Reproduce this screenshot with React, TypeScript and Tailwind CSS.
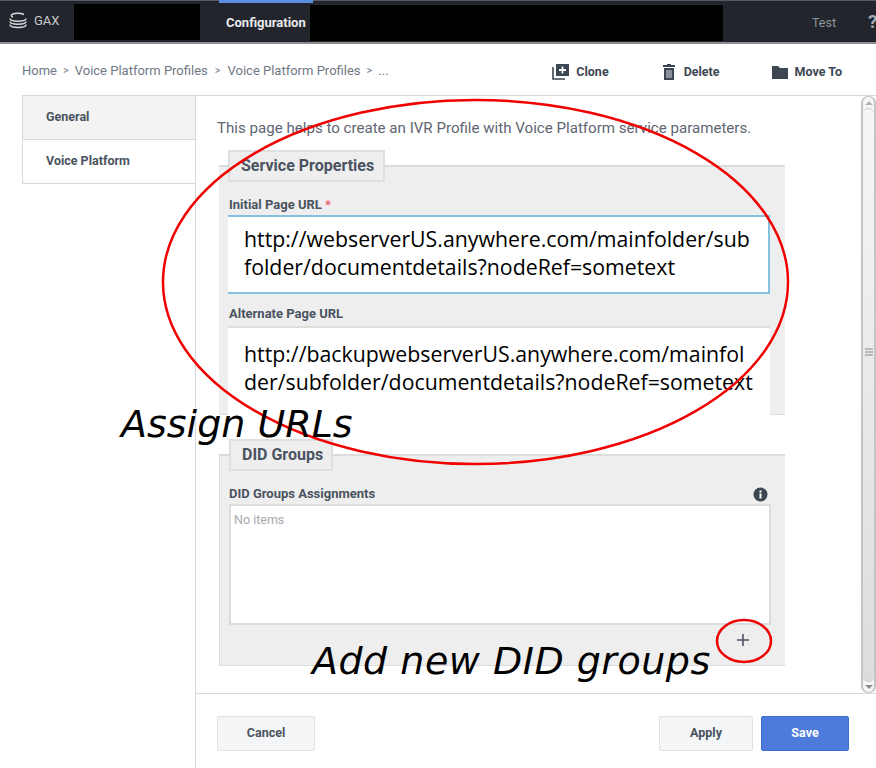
const ui = 'font-["Roboto",sans-serif]';

function CloneIcon() {
  return (
    <svg width="17" height="16" viewBox="0 0 17 16" className="text-[#3d4653]">
      <path d="M1 3v12h12" fill="none" stroke="currentColor" strokeWidth="1.600" />
      <path fillRule="evenodd" d="M4 0h13v12H4zM9.600 2.500v2.600H7v1.800h2.600v2.600h1.800V6.900H14V5.100h-2.600V2.500z" fill="currentColor" />
    </svg>
  );
}

function TrashIcon() {
  return (
    <svg width="12" height="16" viewBox="0 0 12 16" className="text-[#3d4653]">
      <path d="M4 0h4v1h4v2H0V1h4z" fill="currentColor" />
      <path fillRule="evenodd" d="M1 4h10v12H1zM3 6v8h6V6z" fill="currentColor" />
      <path d="M3 6h6v8H3z" fill="#8c929a" />
    </svg>
  );
}

function FolderIcon() {
  return (
    <svg width="16" height="13" viewBox="0 0 16 13" className="text-[#3d4653]">
      <path d="M0 0h6l2 2h8v11H0z" fill="currentColor" />
    </svg>
  );
}

function DbIcon() {
  return (
    <svg width="20" height="18" viewBox="0 0 20 18" fill="none" stroke="#d5d7da" strokeWidth="1.500">
      <path d="M5 5C2 4 3 1.500 9 1.200c3-.1 5 .3 7 1.300" />
      <path d="M2 6.500c0 1.500 3 2.700 8 2.700s8-1.200 8-2.700" />
      <path d="M2 9.500c0 1.500 3 2.700 8 2.700s8-1.200 8-2.700" />
      <path d="M2 12.500c0 1.700 3 3 8 3s8-1.300 8-3" />
    </svg>
  );
}

function TopBar() {
  return (
    <header className="flex h-[44px] shrink-0 items-stretch border-t border-b-2 border-t-[#555a60] border-b-[#8b8d90] bg-[#22262c]">
      <div className="flex w-[74px] shrink-0 items-center gap-[6px] pb-[1px] pl-[8px]">
        <DbIcon />
        <span className="text-[13px] text-[#c9ccd0]">GAX</span>
      </div>
      <div className="mt-[3px] mb-[2px] w-[126px] shrink-0 bg-black" />
      <div className="relative ml-[19px] flex w-[90px] shrink-0 items-center pt-[3px] pl-[7px]">
        <div className="absolute -top-px left-0 h-[3px] w-[94px] bg-[#5b8fe3]" />
        <span className="text-[13px] font-bold whitespace-nowrap text-[#e9ebed]">Configuration</span>
      </div>
      <div className="mt-[4px] mb-[1px] ml-[1px] w-[413px] shrink-0 bg-black" />
      <span className="ml-[89px] shrink-0 self-center pt-[3px] text-[12.500px] text-[#8f949a]">Test</span>
      <span className="ml-[32px] shrink-0 self-center pt-[2px] text-[19px] font-bold text-[#a9adb2]">?</span>
    </header>
  );
}

function ActionBar() {
  return (
    <div className="flex h-[51px] shrink-0 items-center pt-[3px] pr-[34px] pl-[22px] text-[#707985]">
      <div className="flex items-center text-[13px]">
        <span>Home</span>
        <span className="mx-[6px] text-[11px]">&gt;</span>
        <span>Voice Platform Profiles</span>
        <span className="mx-[7px] text-[11px]">&gt;</span>
        <span>Voice Platform Profiles</span>
        <span className="mx-[6px] text-[11px]">&gt;</span>
        <span>...</span>
      </div>
      <div className="ml-auto flex items-center pt-[2px] text-[12.500px] font-bold text-[#3d4653]">
        <span className="flex items-center gap-[7px]"><CloneIcon />Clone</span>
        <span className="ml-[54px] flex items-center gap-[9px]"><TrashIcon />Delete</span>
        <span className="ml-[52px] flex items-center gap-[7px]"><FolderIcon />Move To</span>
      </div>
    </div>
  );
}

function Sidebar() {
  return (
    <aside className="w-[173px] shrink-0 text-[12.500px] font-bold text-[#4a5360]">
      <div className="flex h-[44px] items-center border-b border-l border-[#d8d8d8] bg-[#f3f3f3] pl-[23px]">General</div>
      <div className="flex h-[44px] items-center border-b border-l border-[#d8d8d8] bg-white pl-[23px]">Voice Platform</div>
    </aside>
  );
}

function Legend({ children, width }: { children: string; width: string }) {
  return (
    <div className={`-mt-[17px] ml-[9px] flex h-[32px] items-center border-2 border-[#dfdfdf] bg-[#eeeeee] pl-[11px] text-[16px] font-bold text-[#4a5360] ${width}`}>
      {children}
    </div>
  );
}

function UrlBox({ lines, className }: { lines: string[]; className: string }) {
  return (
    <div className={`w-[542px] bg-white pl-[16px] font-["Open_Sans",sans-serif] text-[21.300px] leading-[28px] whitespace-nowrap text-black ${className}`}>
      {lines.map((l) => (
        <div key={l}>{l}</div>
      ))}
    </div>
  );
}

function Scrollbar() {
  return (
    <div className="mr-px flex w-[15px] shrink-0 flex-col items-center rounded-[7px] border-x-2 border-t border-b border-[#c4c4c2] bg-[#f6f6f4]">
      <div className="mt-[4px] h-0 w-0 border-x-[4px] border-b-[4px] border-x-transparent border-b-[#b5b5b3]" />
      <div className="mt-[3px] flex w-full flex-1 flex-col items-center gap-[1px] rounded-[7px] border-t border-b border-[#c9c9c7] bg-linear-to-b from-[#f6f6f4] to-[#dcdcda] pt-[239px]">
        <div className="h-[2px] w-[8px] bg-[#b8b8b6]" />
        <div className="h-[2px] w-[8px] bg-[#b8b8b6]" />
        <div className="h-[2px] w-[8px] bg-[#b8b8b6]" />
      </div>
      <div className="my-[3px] h-0 w-0 border-x-[4px] border-t-[4px] border-x-transparent border-t-[#8d8d8b]" />
    </div>
  );
}

function Content() {
  return (
    <section className="flex min-w-0 flex-1 flex-col border-l border-[#d8d8d8]">
      <div className="flex h-[598px] shrink-0 border-b border-[#d8d8d8]">
        <div className="w-[665px] shrink-0 pt-[23px] pl-[21px]">
          <p className="text-[15.100px] leading-[18px] whitespace-nowrap text-[#5d6672]">
            This page helps to create an IVR Profile with Voice Platform service parameters.
          </p>
          <div className="mt-[28px] ml-[2px] h-[250px] w-[566px] border-t-2 border-b border-[#dcdcdc] bg-[#eeeeee]">
            <Legend width="w-[157px]">Service Properties</Legend>
            <div className="mt-[15px] pl-[10px] text-[13px] leading-[16px] font-bold text-[#4a5360]">
              Initial Page URL <span className="text-[#f2606a]">*</span>
            </div>
            <div className="mt-[2px] ml-[9px]">
              <UrlBox
                className="h-[79px] border-y-2 border-r-2 border-[#85c0de] pt-[8px]"
                lines={['http://webserverUS.anywhere.com/mainfolder/sub', 'folder/documentdetails?nodeRef=sometext']}
              />
            </div>
            <div className="mt-[12px] pl-[10px] text-[13px] leading-[16px] font-bold text-[#4a5360]">Alternate Page URL</div>
            <div className="mt-[4px] ml-[9px]">
              <UrlBox
                className="h-[89px] border-t-2 border-[#dedede] pt-[12px]"
                lines={['http://backupwebserverUS.anywhere.com/mainfol', 'der/subfolder/documentdetails?nodeRef=sometext']}
              />
            </div>
          </div>
          <div className="mt-[39px] ml-[2px] h-[212px] w-[566px] border-t-2 border-b border-l border-[#dcdcdc] bg-[#eeeeee]">
            <Legend width="w-[104px]">DID Groups</Legend>
            <div className="mt-[15px] flex w-[550px] items-center justify-between pr-[2px] pl-[9px] text-[13px] leading-[16px] font-bold text-[#4a5360]">
              DID Groups Assignments
              <svg width="15" height="15" viewBox="0 0 15 15" className="text-[#3d4653]">
                <circle cx="7.500" cy="7.500" r="7" fill="currentColor" />
                <path d="M6.500 6.500h2v5h-2zM6.500 3.500h2v2h-2z" fill="#fff" />
              </svg>
            </div>
            <div className="mt-[2px] ml-[9px] h-[121px] w-[542px] border-2 border-[#dcdcdc] bg-white pt-[5px] pl-[3px] text-[12.500px] font-normal text-[#a6aab0]">
              No items
            </div>
            <svg width="14" height="14" viewBox="0 0 14 14" className="mt-[8px] ml-[516px] text-[#4a5360]">
              <path d="M7 1v12M1 7h12" stroke="currentColor" strokeWidth="1.600" fill="none" />
            </svg>
          </div>
        </div>
        <Scrollbar />
      </div>
      <footer className="flex flex-1 items-start pt-[22px] pr-[27px] pl-[21px] text-[12.500px] font-bold">
        <button className="h-[35px] w-[98px] rounded-[2px] border border-[#dfe3e6] bg-[#f3f5f7] text-[#4a5360]">Cancel</button>
        <button className="ml-auto h-[35px] w-[94px] rounded-[2px] border border-[#dfe3e6] bg-[#f3f5f7] text-[#4a5360]">Apply</button>
        <button className="ml-[8px] h-[35px] w-[88px] rounded-[2px] border border-[#3f6fd0] bg-[#4d7bdc] text-white">Save</button>
      </footer>
    </section>
  );
}

function Annotations() {
  return (
    <>
      <svg width="876" height="768" className="pointer-events-none absolute top-0 left-0" fill="none" stroke="#f00000" strokeWidth="2.500">
        <ellipse cx="475.500" cy="282" rx="312.500" ry="182" />
        <ellipse cx="744" cy="641" rx="27" ry="21" />
      </svg>
      <span className='absolute top-[402px] left-[121px] font-["DejaVu_Sans",sans-serif] text-[38px] leading-[44px] whitespace-nowrap text-black italic'>Assign URLs</span>
      <span className='absolute top-[639px] left-[312px] font-["DejaVu_Sans",sans-serif] text-[38px] leading-[44px] tracking-[0.5px] whitespace-nowrap text-black italic'>Add new DID groups</span>
    </>
  );
}

export default function App() {
  return (
    <div className={`relative flex h-[768px] w-[876px] flex-col overflow-hidden bg-white ${ui}`}>
      <TopBar />
      <ActionBar />
      <main className="ml-[22px] flex min-h-0 flex-1 border-t border-[#d8d8d8]">
        <Sidebar />
        <Content />
      </main>
      <Annotations />
    </div>
  );
}
